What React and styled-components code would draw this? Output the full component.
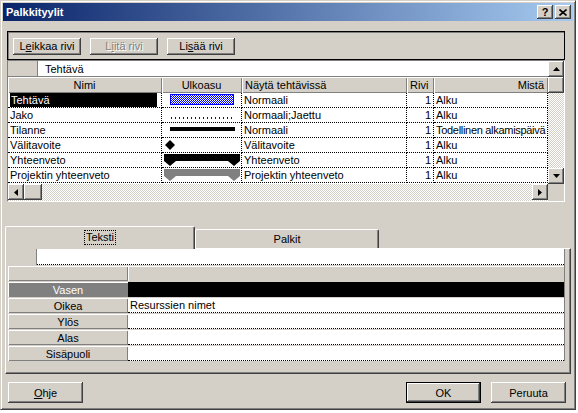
import React from 'react';
import styled, { createGlobalStyle } from 'styled-components';

const GlobalStyle = createGlobalStyle`
  html, body { margin: 0; padding: 0; background: #fff; }
  body { font-family: "Liberation Sans", Arial, sans-serif; font-size: 11px; color: #000; }
  * { box-sizing: border-box; }
`;

const raised = `
  box-shadow: inset -1px -1px #404040, inset 1px 1px #fff, inset -2px -2px #808080, inset 2px 2px #d4d0c8;
`;

const Dialog = styled.div`
  width: 576px;
  height: 410px;
  background: #d4d0c8;
  border: 1px solid;
  border-color: #d4d0c8 #404040 #404040 #d4d0c8;
  box-shadow: inset 1px 1px #fff, inset -1px -1px #808080;
  padding: 2px;
  display: flex;
  flex-direction: column;
`;

const TitleBar = styled.div`
  height: 18px;
  background: linear-gradient(to right, #0a246a, #a6caf0);
  display: flex;
  align-items: center;
  justify-content: space-between;
  padding: 0 2px 0 3px;
  color: #fff;
  font-weight: bold;
  font-size: 11px;
`;

const TitleButtons = styled.div`
  display: flex;
  gap: 2px;
`;

const TitleButton = styled.div`
  width: 16px;
  height: 14px;
  background: #d4d0c8;
  ${raised}
  display: flex;
  align-items: center;
  justify-content: center;
  color: #000;
  font-size: 11px;
  font-weight: bold;
  line-height: 1;
`;

const Toolbar = styled.div`
  margin: 10px 0 0 4px;
  width: 558px;
  height: 29px;
  border: 1px solid #000;
  box-shadow: inset 1px 1px #808080;
  display: flex;
  align-items: center;
  gap: 9px;
  padding: 1px 0 0 5px;
`;

const Button = styled.div`
  width: ${p => p.$w || 68}px;
  height: ${p => p.$h || 17}px;
  display: flex;
  align-items: center;
  justify-content: center;
  background: #d4d0c8;
  ${raised}
  color: ${p => (p.$disabled ? '#808080' : '#000')};
  text-shadow: ${p => (p.$disabled ? '1px 1px #fff' : 'none')};
  white-space: nowrap;
  ${p => p.$default && `
    border: 1px solid #000;
  `}
`;

const Grid = styled.div`
  margin-left: 4px;
  width: 558px;
  height: 142px;
  border: 1px solid;
  border-color: #808080 #fff #fff #808080;
  background: #fff;
  display: flex;
  flex-direction: column;
`;

const GridMain = styled.div`
  display: flex;
  height: 123px;
`;

const Table = styled.div`
  width: 540px;
  display: flex;
  flex-direction: column;
`;

const EditRow = styled.div`
  height: 16px;
  display: flex;
  border-bottom: 1px solid #808080;
`;

const EditStub = styled.div`
  width: ${p => p.$w || 30}px;
  background: #d4d0c8;
  border-right: 1px solid #808080;
`;

const EditValue = styled.div`
  flex: 1;
  background: #fff;
  padding-left: ${p => p.$pad || 7}px;
  display: flex;
  align-items: center;
`;

const Row = styled.div`
  display: flex;
  height: ${p => p.$h || 15}px;
`;

const HeadCell = styled.div`
  width: ${p => p.$w}px;
  background: #d4d0c8;
  box-shadow: inset 1px 1px #fff, inset -1px -1px #808080;
  display: flex;
  align-items: center;
  justify-content: ${p => p.$align || 'flex-start'};
  padding: 0 4px 0 3px;
  white-space: nowrap;
  overflow: hidden;
`;

const Cell = styled.div`
  width: ${p => p.$w}px;
  border-bottom: 1px dotted #000;
  border-right: 1px dotted #000;
  display: flex;
  align-items: center;
  justify-content: ${p => p.$align || 'flex-start'};
  padding: 0 ${p => (p.$align === 'flex-end' ? 2 : 0)}px 0 ${p => (p.$draw ? 0 : 2)}px;
  white-space: nowrap;
  overflow: hidden;
  letter-spacing: ${p => (p.$tight ? '-0.3px' : 'normal')};
`;

const Selected = styled.div`
  flex: 1;
  align-self: stretch;
  margin-right: 4px;
  background: #000;
  color: #fff;
  display: flex;
  align-items: center;
  padding-left: 1px;
`;

const track = `
  background: repeating-conic-gradient(#fff 0 25%, #d4d0c8 0 50%) 0 0 / 2px 2px;
`;

const VScroll = styled.div`
  width: 16px;
  display: flex;
  flex-direction: column;
  ${track}
`;

const HScroll = styled.div`
  height: 17px;
  display: flex;
  ${track}
`;

const ScrollBtn = styled.div`
  width: ${p => p.$w || 16}px;
  height: 16px;
  flex-shrink: 0;
  background: #d4d0c8;
  ${raised}
  display: flex;
  align-items: center;
  justify-content: center;
`;

const Spacer = styled.div`
  flex: 1;
`;

const Corner = styled.div`
  width: 16px;
  background: #d4d0c8;
`;

const Tabs = styled.div`
  margin: 24px 0 0 2px;
  display: flex;
  align-items: flex-end;
  height: 22px;
  position: relative;
  z-index: 1;
`;

const Tab = styled.div`
  width: ${p => p.$w}px;
  height: ${p => (p.$active ? 23 : 19)}px;
  margin-bottom: ${p => (p.$active ? -1 : 0)}px;
  background: #d4d0c8;
  border-top: 1px solid #fff;
  border-left: 1px solid #fff;
  border-right: 1px solid #404040;
  box-shadow: inset -1px 0 #808080;
  border-radius: 2px 2px 0 0;
  display: flex;
  justify-content: center;
  padding-top: ${p => (p.$active ? 4 : 3)}px;
`;

const Focus = styled.span`
  outline: 1px dotted #000;
  outline-offset: 0;
  padding: 0 1px;
  height: 13px;
  line-height: 13px;
`;

const Panel = styled.div`
  margin-left: 2px;
  width: 566px;
  height: 126px;
  border: 1px solid;
  border-color: #fff #404040 #404040 #fff;
  box-shadow: inset -1px -1px #808080;
  padding: 0 4px 0 2px;
`;

const Props = styled.div`
  width: 557px;
  display: flex;
  flex-direction: column;
  gap: 1px;
  border-right: 1px solid #808080;
`;

const PropRow = styled.div`
  display: flex;
  height: ${p => p.$h || 16}px;
`;

const PropLabel = styled.div`
  width: 120px;
  background: ${p => (p.$sel ? '#808080' : '#d4d0c8')};
  color: ${p => (p.$sel ? '#fff' : '#000')};
  box-shadow: inset 1px 1px #fff, inset -1px -1px #808080;
  display: flex;
  align-items: center;
  justify-content: center;
`;

const PropValue = styled.div`
  flex: 1;
  background: ${p => (p.$head ? '#d4d0c8' : p.$sel ? '#000' : '#fff')};
  box-shadow: ${p => (p.$head ? 'inset 1px 1px #fff' : 'none')};
  border-bottom: ${p => (p.$head ? 'none' : '1px dotted #000')};
  display: flex;
  align-items: center;
  padding-left: 2px;
`;

const Footer = styled.div`
  margin: 8px 7px 0 5px;
  display: flex;
  align-items: center;
`;

const FooterRight = styled.div`
  margin-left: auto;
  display: flex;
  gap: 10px;
`;

const Arrow = ({ dir }) => {
  const pts = {
    up: '0,4 7,4 3.5,0',
    down: '0,0 7,0 3.5,4',
    left: '4,0 4,7 0,3.5',
    right: '0,0 0,7 4,3.5',
  }[dir];
  const vert = dir === 'up' || dir === 'down';
  return (
    <svg width={vert ? 7 : 4} height={vert ? 4 : 7}>
      <polygon points={pts} fill="#000" />
    </svg>
  );
};

const Summary = ({ color }) => (
  <svg width="80" height="14">
    <polygon points="2,1 78,1 78,8 72,13 66,8 14,8 8,13 2,8" fill={color} />
  </svg>
);

const Drawing = ({ kind }) => {
  if (kind === 'task') {
    return (
      <svg width="80" height="14">
        <defs>
          <pattern id="chk" width="2" height="2" patternUnits="userSpaceOnUse">
            <rect width="2" height="2" fill="#fff" />
            <rect width="1" height="1" fill="#0000ff" />
            <rect x="1" y="1" width="1" height="1" fill="#0000ff" />
          </pattern>
        </defs>
        <rect x="8.5" y="1.5" width="63" height="10" fill="url(#chk)" stroke="#0000ff" />
      </svg>
    );
  }
  if (kind === 'split') {
    return (
      <svg width="80" height="14">
        <line x1="9" y1="10" x2="73" y2="10" stroke="#0000ff" strokeWidth="2" strokeDasharray="1 3" />
      </svg>
    );
  }
  if (kind === 'progress') {
    return (
      <svg width="80" height="14">
        <rect x="8" y="4" width="65" height="4" fill="#000" />
      </svg>
    );
  }
  if (kind === 'milestone') {
    return (
      <svg width="80" height="14">
        <polygon points="8,2 13,7 8,12 3,7" fill="#000" />
      </svg>
    );
  }
  if (kind === 'summary') return <Summary color="#000" />;
  return <Summary color="#808080" />;
};

const rows = [
  { name: 'Tehtävä', kind: 'task', show: 'Normaali', from: 'Alku', sel: true },
  { name: 'Jako', kind: 'split', show: 'Normaali;Jaettu', from: 'Alku' },
  { name: 'Tilanne', kind: 'progress', show: 'Normaali', from: 'Todellinen alkamispäivä' },
  { name: 'Välitavoite', kind: 'milestone', show: 'Välitavoite', from: 'Alku' },
  { name: 'Yhteenveto', kind: 'summary', show: 'Yhteenveto', from: 'Alku' },
  { name: 'Projektin yhteenveto', kind: 'project', show: 'Projektin yhteenveto', from: 'Alku' },
];

const cols = [154, 80, 165, 27, 114];

const props = ['Vasen', 'Oikea', 'Ylös', 'Alas', 'Sisäpuoli'];

const App = () => {
  return (
    <>
      <GlobalStyle />
      <Dialog>
        <TitleBar>
          <span>Palkkityylit</span>
          <TitleButtons>
            <TitleButton>?</TitleButton>
            <TitleButton>
              <svg width="8" height="7">
                <path d="M0.5 0.5 L7.5 6.5 M7.5 0.5 L0.5 6.5" stroke="#000" strokeWidth="1.6" />
              </svg>
            </TitleButton>
          </TitleButtons>
        </TitleBar>

        <Toolbar>
          <Button>L<u>e</u>ikkaa rivi</Button>
          <Button $disabled>L<u>i</u>itä rivi</Button>
          <Button>Li<u>s</u>ää rivi</Button>
        </Toolbar>

        <Grid>
          <GridMain>
            <Table>
              <EditRow>
                <EditStub />
                <EditValue>Tehtävä</EditValue>
              </EditRow>
              <Row $h={16}>
                <HeadCell $w={cols[0]} $align="center">Nimi</HeadCell>
                <HeadCell $w={cols[1]} $align="center">Ulkoasu</HeadCell>
                <HeadCell $w={cols[2]}>Näytä tehtävissä</HeadCell>
                <HeadCell $w={cols[3]}>Rivi</HeadCell>
                <HeadCell $w={cols[4]} $align="flex-end">Mistä</HeadCell>
              </Row>
              {rows.map(r => (
                <Row key={r.name}>
                  <Cell $w={cols[0]}>
                    {r.sel ? <Selected>{r.name}</Selected> : r.name}
                  </Cell>
                  <Cell $w={cols[1]} $draw>
                    <Drawing kind={r.kind} />
                  </Cell>
                  <Cell $w={cols[2]}>{r.show}</Cell>
                  <Cell $w={cols[3]} $align="flex-end">1</Cell>
                  <Cell $w={cols[4]} $tight={r.from.length > 12}>{r.from}</Cell>
                </Row>
              ))}
            </Table>
            <VScroll>
              <ScrollBtn><Arrow dir="up" /></ScrollBtn>
              <ScrollBtn />
              <Spacer />
              <ScrollBtn><Arrow dir="down" /></ScrollBtn>
            </VScroll>
          </GridMain>
          <HScroll>
            <ScrollBtn><Arrow dir="left" /></ScrollBtn>
            <ScrollBtn $w={18} />
            <Spacer />
            <ScrollBtn><Arrow dir="right" /></ScrollBtn>
            <Corner />
          </HScroll>
        </Grid>

        <Tabs>
          <Tab $w={190} $active><Focus>Teksti</Focus></Tab>
          <Tab $w={184}>Palkit</Tab>
        </Tabs>
        <Panel>
          <Props>
            <PropRow>
              <EditStub $w={29} />
              <PropValue />
            </PropRow>
            <PropRow $h={15}>
              <PropLabel />
              <PropValue $head />
            </PropRow>
            {props.map((p, i) => (
              <PropRow key={p} $h={15}>
                <PropLabel $sel={i === 0}>{p}</PropLabel>
                <PropValue $sel={i === 0}>{i === 1 ? 'Resurssien nimet' : ''}</PropValue>
              </PropRow>
            ))}
          </Props>
        </Panel>

        <Footer>
          <Button $w={75} $h={21}><u>O</u>hje</Button>
          <FooterRight>
            <Button $w={75} $h={21} $default>OK</Button>
            <Button $w={75} $h={21}>Peruuta</Button>
          </FooterRight>
        </Footer>
      </Dialog>
    </>
  );
};

export default App;
